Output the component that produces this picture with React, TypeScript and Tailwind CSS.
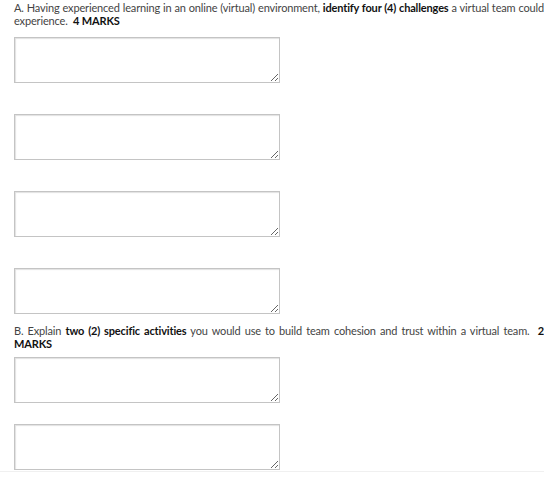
import React from 'react'

const boxClass =
  'block w-[266px] h-[46px] resize border border-[#c4c4c4] bg-white shadow-[inset_1px_1px_1px_rgba(0,0,0,0.12)] outline-none'

export default function App() {
  return (
    <div className="min-h-[477px] bg-white font-['Lato','Liberation_Sans',sans-serif] text-[11px] leading-[13px] tracking-[-0.15px] text-[#444]">
      <div className="pl-[14px] pt-[1px]">
        <p className="text-justify">
          A. Having experienced learning in an online (virtual) environment,{' '}
          <b className="font-bold text-[#111]">identify four (4) challenges</b> a virtual team could
          experience.&nbsp; <b className="font-bold text-[#111]">4 MARKS</b>
        </p>

        <div className="mt-[10px] flex flex-col gap-[31px]">
          <textarea className={boxClass} />
          <textarea className={boxClass} />
          <textarea className={boxClass} />
          <textarea className={boxClass} />
        </div>

        <p className="mt-[10px] text-justify">
          B. Explain <b className="font-bold text-[#111]">two (2) specific activities</b> you would use
          to build team cohesion and trust within a virtual team.&nbsp;{' '}
          <b className="font-bold text-[#111]">2 MARKS</b>
        </p>

        <div className="mt-[7px] flex flex-col gap-[21px]">
          <textarea className={boxClass} />
          <textarea className={boxClass} />
        </div>
      </div>
      <div className="mt-[1px] border-t border-[#f0f0f0]" />
    </div>
  )
}
